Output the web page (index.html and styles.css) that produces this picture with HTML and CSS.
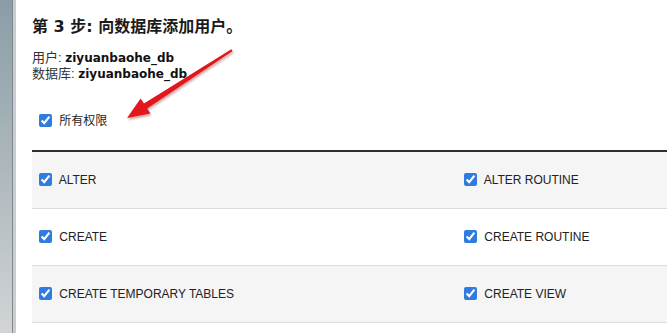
FILE: index.html
```html
<!DOCTYPE html>
<html lang="zh-CN">
<head>
    <meta charset="UTF-8">
    <meta name="viewport" content="width=device-width, initial-scale=1.0">
    <title>向数据库添加用户</title>
    <link rel="stylesheet" href="styles.css">
</head>
<body>
    <div class="page">
        <div class="edge"></div>
        <main class="content">
            <h2 class="step-title">第 3 步: 向数据库添加用户。</h2>
            <p class="info">用户: <b>ziyuanbaohe_db</b></p>
            <p class="info">数据库: <b>ziyuanbaohe_db</b></p>

            <label class="all-privs">
                <input type="checkbox" checked> 所有权限
            </label>

            <div class="privs">
                <div class="row">
                    <label class="cell"><input type="checkbox" checked> ALTER</label>
                    <label class="cell"><input type="checkbox" checked> ALTER ROUTINE</label>
                </div>
                <div class="row">
                    <label class="cell"><input type="checkbox" checked> CREATE</label>
                    <label class="cell"><input type="checkbox" checked> CREATE ROUTINE</label>
                </div>
                <div class="row">
                    <label class="cell"><input type="checkbox" checked> CREATE TEMPORARY TABLES</label>
                    <label class="cell"><input type="checkbox" checked> CREATE VIEW</label>
                </div>
            </div>

            <!-- annotation arrow -->
            <svg class="arrow" width="667" height="333" viewBox="0 0 667 333">
                <polygon points="127,118 140.6,98.4 143.9,103.5 231.3,49.3 232.7,50.9 147.1,108.5 150.4,113.6" fill="#e3171b"/>
            </svg>
        </main>
    </div>
</body>
</html>
```

FILE: styles.css
```css
*,
*::after,
*::before{
    padding: 0;
    margin: 0;
    box-sizing: border-box;
}
html, body{
    width: 667px;
    height: 333px;
    overflow: hidden;
    background: #fff;
}
body{
    font: normal 12px/16px "Liberation Sans", "Noto Sans CJK SC", sans-serif;
    color: #222;
}
.page{
    display: flex;
    height: 333px;
    overflow: hidden;
}
.edge{
    width: 16px;
    flex-shrink: 0;
    background: linear-gradient(to bottom, #8a9da6 0%, #a9b5ba 45%, #d2d4d5 100%);
    border-right: 3px solid #c9cdcf;
    box-shadow: inset -1px 0 0 #7e8a90;
}
.content{
    position: relative;
    flex: 1;
    min-width: 0;
    padding: 17px 0 0 16px;
}
.step-title{
    font-family: "DejaVu Sans", "Noto Sans CJK SC", sans-serif;
    font-size: 16px;
    line-height: 20px;
    font-weight: bold;
    color: #1a1a1a;
    margin-bottom: 13px;
}
.info{
    font-size: 13px;
    line-height: 16px;
    color: #333;
}
.info b{
    font-family: "DejaVu Sans", sans-serif;
    font-size: 12px;
    color: #111;
}
input[type="checkbox"]{
    width: 13px;
    height: 13px;
    margin: 0 4px 0 0;
    accent-color: #2f7be0;
    vertical-align: -2px;
}
.all-privs{
    display: block;
    margin-top: 31px;
    padding-left: 7px;
    line-height: 16px;
}
.privs{
    margin-top: 21px;
    width: 880px;
    border-top: 2px solid #2e2e2e;
}
.row{
    display: grid;
    grid-template-columns: 425px 1fr;
    height: 57px;
    align-items: center;
    border-bottom: 1px solid #dcdcdc;
    background: #f5f5f5;
}
.row:nth-child(2){
    background: #fff;
}
.cell{
    padding-left: 7px;
    padding-bottom: 1px;
}
.arrow{
    position: absolute;
    left: -16px;
    top: 0;
    pointer-events: none;
    filter: drop-shadow(1px 2px 1px rgba(120, 0, 0, 0.35));
}
```
